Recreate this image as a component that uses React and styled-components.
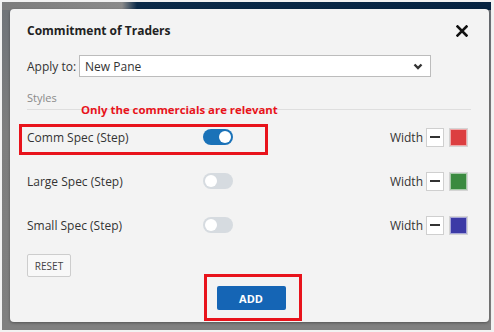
import * as React from 'react';
import styled, { createGlobalStyle } from 'styled-components';

const GlobalStyle = createGlobalStyle`
  html, body {
    margin: 0;
    padding: 0;
    background: #ffffff;
  }
  body {
    font-family: 'Open Sans', 'Liberation Sans', sans-serif;
    -webkit-font-smoothing: antialiased;
  }
`;

const Backdrop = styled.div`
  box-sizing: border-box;
  width: 494px;
  height: 332px;
  border: 2px solid #f2f2f2;
  border-right-width: 3px;
  border-bottom-width: 2px;
  padding: 7px 0 0 8px;
  background:
    linear-gradient(90deg, #7c7c7c 0, #8a8a8a 120px, #0b2a48 135px, #062341 100%) top / 100% 8px no-repeat,
    linear-gradient(180deg, #6f747a 0, #7e7e7e 40%, #808080 100%);
`;

const Dialog = styled.div`
  position: relative;
  box-sizing: border-box;
  width: 479px;
  height: 313px;
  background: #f3f3f3;
  border-radius: 4px;
  box-shadow: 0 1px 3px rgba(0, 0, 0, 0.35);
  padding: 12px 18px 9px 17px;
  color: #333;
  display: flex;
  flex-direction: column;
`;

const Header = styled.div`
  display: flex;
  align-items: center;
  justify-content: space-between;
  height: 18px;
  padding-right: 3px;
`;

const Title = styled.div`
  font-size: 12px;
  font-weight: 700;
  color: #222;
`;

const CloseButton = styled.button`
  border: 0;
  padding: 0;
  background: none;
  width: 12px;
  height: 12px;
  margin-top: 2px;
  display: flex;
`;

const ApplyRow = styled.div`
  display: flex;
  align-items: center;
  gap: 3px;
  margin-top: 16px;
`;

const FieldLabel = styled.span`
  font-size: 12px;
  color: #333;
`;

const Select = styled.div`
  box-sizing: border-box;
  width: 352px;
  height: 22px;
  background: #fff;
  border: 1px solid #bcbcbc;
  display: flex;
  align-items: center;
  justify-content: space-between;
  padding: 0 7px 0 5px;
  font-size: 12px;
  color: #333;
`;

const SectionLabel = styled.div`
  margin-top: 13px;
  font-size: 11px;
  color: #8a8a8a;
  line-height: 16px;
`;

const Divider = styled.div`
  height: 1px;
  background: #dedede;
  margin-top: 3px;
  margin-bottom: 5px;
`;

const StyleRow = styled.div`
  display: grid;
  grid-template-columns: 176px 30px 1fr;
  align-items: center;
  height: 44px;
  padding-right: 4px;
  font-size: 12px;
  color: #333;
`;

const LineControls = styled.div`
  display: flex;
  align-items: center;
  justify-content: flex-end;
`;

const WidthLabel = styled.span`
  margin-right: 3px;
  font-size: 12px;
`;

const Toggle = styled.div`
  position: relative;
  width: 30px;
  height: 16px;
  border-radius: 8px;
  background: ${p => (p.on ? '#1a72b8' : '#d6dbe0')};
  &::after {
    content: '';
    position: absolute;
    top: 2px;
    left: ${p => (p.on ? '16px' : '2px')};
    width: 12px;
    height: 12px;
    border-radius: 50%;
    background: #fff;
  }
`;

const WidthBox = styled.div`
  box-sizing: border-box;
  width: 18px;
  height: 19px;
  margin-right: 6px;
  background: #fff;
  border: 1px solid #cfcfcf;
  display: flex;
  align-items: center;
  justify-content: center;
  &::before {
    content: '';
    width: 10px;
    height: 2px;
    background: #333;
  }
`;

const Swatch = styled.div`
  box-sizing: border-box;
  width: 17px;
  height: 17px;
  background: ${p => p.color};
  border: 1px solid rgba(255, 255, 255, 0.55);
  outline: 1px solid #d4d4d4;
`;

const ResetButton = styled.button`
  align-self: flex-start;
  box-sizing: border-box;
  margin-top: 7px;
  width: 44px;
  height: 23px;
  padding: 0;
  background: #f8f8f8;
  border: 1px solid #cdcdcd;
  border-radius: 2px;
  font-family: inherit;
  font-size: 10px;
  color: #444;
`;

const AddButton = styled.button`
  align-self: center;
  box-sizing: border-box;
  margin-top: 9px;
  margin-left: 4px;
  width: 69px;
  height: 24px;
  padding: 0;
  border: 0;
  border-radius: 2px;
  background: #1565b5;
  color: #fff;
  font-family: inherit;
  font-weight: 700;
  font-size: 11px;
`;

const Highlight = styled.div`
  position: absolute;
  box-sizing: border-box;
  left: ${p => p.x}px;
  top: ${p => p.y}px;
  width: ${p => p.w}px;
  height: ${p => p.h}px;
  border: 3px solid #e8131b;
  pointer-events: none;
`;

const Note = styled.div`
  position: absolute;
  left: 71px;
  top: 92px;
  line-height: 18px;
  font-size: 11.4px;
  font-weight: 700;
  color: #e8131b;
`;

const CloseIcon = () => (
  <svg width="12" height="12" viewBox="0 0 12 12">
    <path d="M1.5 1.5 L10.5 10.5 M10.5 1.5 L1.5 10.5" stroke="#111" strokeWidth="2.6" strokeLinecap="square" />
  </svg>
);

const Chevron = () => (
  <svg width="10" height="7" viewBox="0 0 10 7">
    <path d="M1.5 1.5 L5 5 L8.5 1.5" fill="none" stroke="#333" strokeWidth="2.4" />
  </svg>
);

const series = [
  { name: 'Comm Spec (Step)', on: true, color: '#dc3e40' },
  { name: 'Large Spec (Step)', on: false, color: '#3a8a3f' },
  { name: 'Small Spec (Step)', on: false, color: '#3c3aa6' }
];

export default function App() {
  return (
    <>
      <GlobalStyle />
      <Backdrop>
        <Dialog>
          <Header>
            <Title>Commitment of Traders</Title>
            <CloseButton>
              <CloseIcon />
            </CloseButton>
          </Header>
          <ApplyRow>
            <FieldLabel>Apply to:</FieldLabel>
            <Select>
              <span>New Pane</span>
              <Chevron />
            </Select>
          </ApplyRow>
          <SectionLabel>Styles</SectionLabel>
          <Divider />
          {series.map(s => (
            <StyleRow key={s.name}>
              <span>{s.name}</span>
              <Toggle on={s.on} />
              <LineControls>
                <WidthLabel>Width</WidthLabel>
                <WidthBox />
                <Swatch color={s.color} />
              </LineControls>
            </StyleRow>
          ))}
          <ResetButton>RESET</ResetButton>
          <AddButton>ADD</AddButton>

          <Note>Only the commercials are relevant</Note>
          <Highlight x={9} y={115} w={249} h={31} />
          <Highlight x={194} y={265} w={98} h={47} />
        </Dialog>
      </Backdrop>
    </>
  );
}
